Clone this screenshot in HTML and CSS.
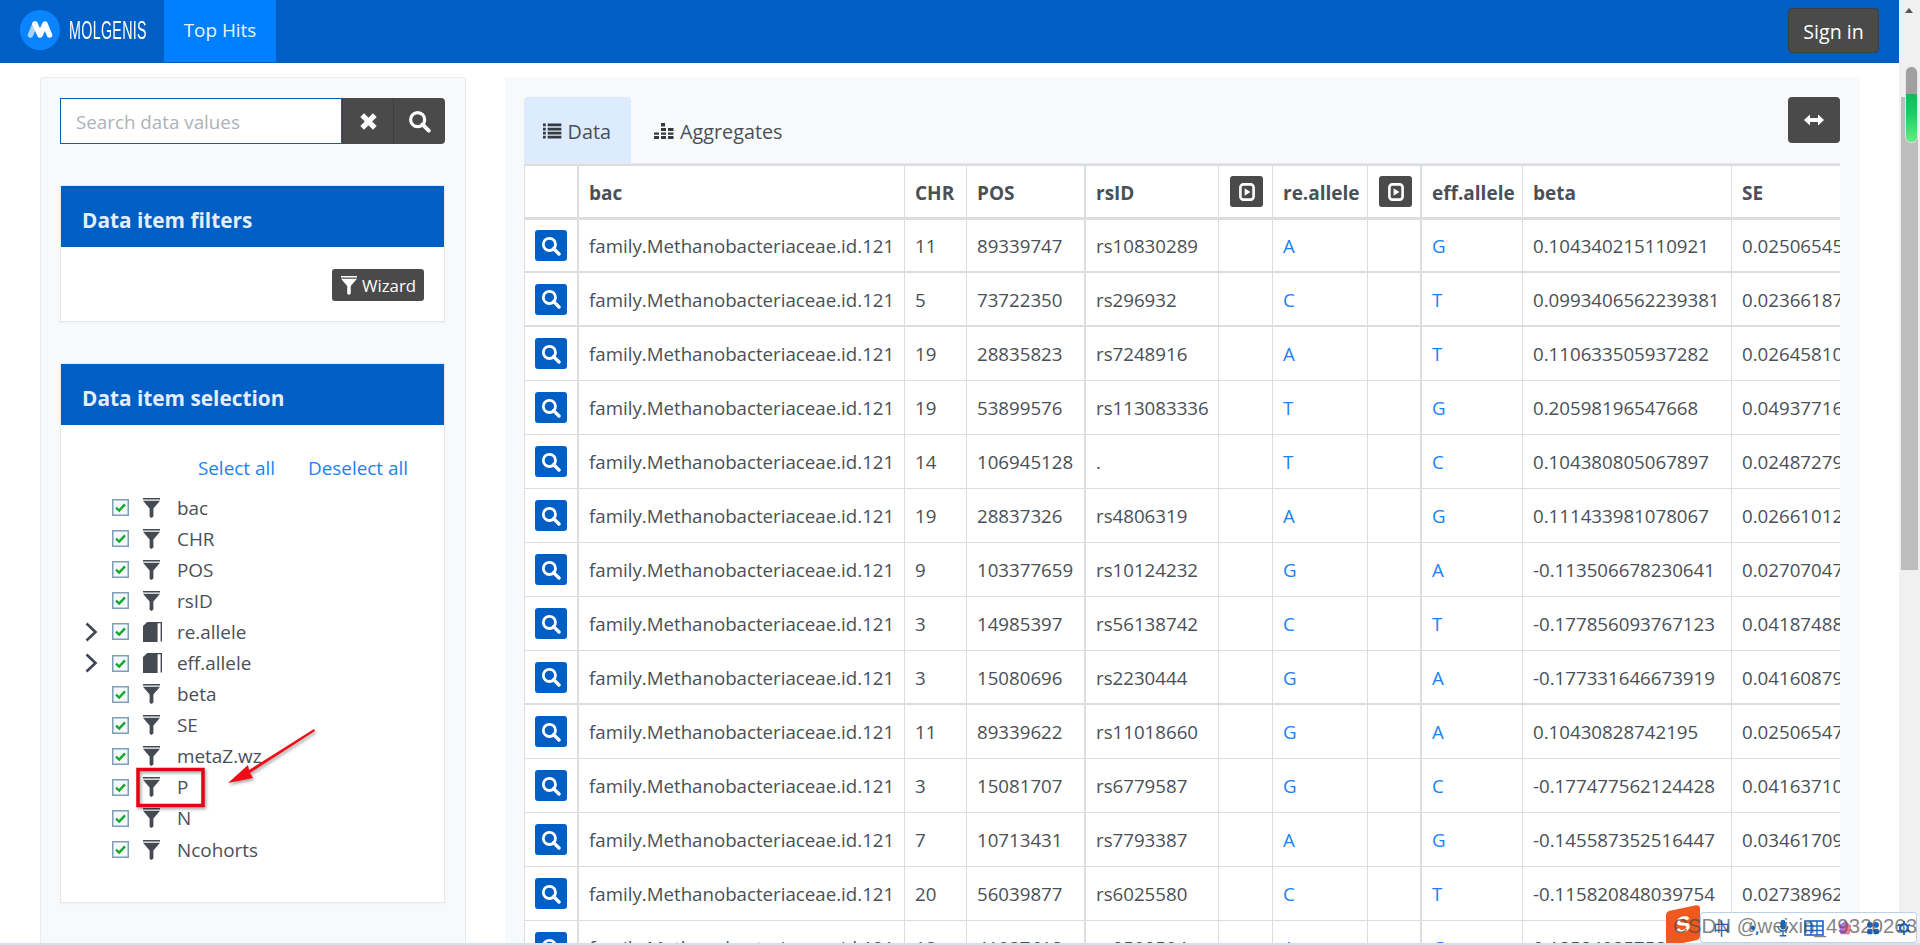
FILE: index.html
```html
<!DOCTYPE html>
<html lang="en">
<head>
<meta charset="utf-8">
<title>MOLGENIS Top Hits</title>
<link rel="stylesheet" href="styles.css">
</head>
<body>
<svg class="defs" width="0" height="0" aria-hidden="true">
  <symbol id="i-search" viewBox="0 0 20 20"><circle cx="8.4" cy="8.4" r="6.1" fill="none" stroke="currentColor" stroke-width="2.8"/><path d="M12.6 12.6L18 18" stroke="currentColor" stroke-width="3.4" stroke-linecap="round"/></symbol>
  <symbol id="i-times" viewBox="0 0 20 20"><path d="M4 4L16 16M16 4L4 16" stroke="currentColor" stroke-width="5" fill="none"/></symbol>
  <symbol id="i-filter" viewBox="0 0 17 20"><path d="M0 0H17V1.6H0zM0 2.8H17L10.4 10.5V18.4L8.4 20L6.6 18.8V10.5z" fill="currentColor"/></symbol>
  <symbol id="i-book" viewBox="0 0 19 20"><path d="M0 4L3.5 .8H14.600V20H0z" fill="currentColor"/><path d="M4 0H19V19.400H17.600V1.300H4.400L3 2.500z" fill="currentColor"/></symbol>
  <symbol id="i-chev" viewBox="0 0 13 20"><path d="M1.5 1.5L10.5 10L1.5 18.5" fill="none" stroke="currentColor" stroke-width="2.6"/></symbol>
  <symbol id="i-list" viewBox="0 0 20 16"><path d="M0 0H3V3H0zM5 0H20V3H5zM0 4.4H3V7.4H0zM5 4.4H20V7.4H5zM0 8.8H3V11.8H0zM5 8.8H20V11.8H5zM0 13H3V16H0zM5 13H20V16H5z" fill="currentColor"/></symbol>
  <symbol id="i-agg" viewBox="0 0 20 16"><path d="M0 13H5V16H0zM0 9.4H5V11.8H0zM7 13H12V16H7zM7 9.4H12V11.8H7zM7 5H12V8H7zM7 0H11V3.4H7zM14 13H19.5V16H14zM14 9.4H19.5V11.8H14zM14 5H19.5V8H14z" fill="currentColor"/></symbol>
  <symbol id="i-expand" viewBox="0 0 20 14"><path d="M0 7L6 1.5V5H14V1.5L20 7L14 12.5V9H6V12.5z" fill="currentColor"/></symbol>
  <symbol id="i-play" viewBox="0 0 16 18"><rect x="1.4" y="1.4" width="13.2" height="15.2" rx="3" fill="none" stroke="currentColor" stroke-width="2.6"/><path d="M5.6 5.2L11.4 9L5.6 12.8z" fill="currentColor"/></symbol>
  <symbol id="i-check" viewBox="0 0 17 17"><rect x=".75" y=".75" width="15.5" height="15.5" fill="#f4f8fb" stroke="#7f9fb8" stroke-width="1.5"/><path d="M4 8.6L7.2 11.6L13 5.4" fill="none" stroke="#14a82e" stroke-width="2.4"/></symbol>
</svg>

<div class="page">
  <div class="content">
    <header class="navbar">
      <div class="brand">
        <svg class="brand-mark" viewBox="0 0 40 40" aria-hidden="true">
          <circle cx="20" cy="20" r="20" fill="#0a84ff"/>
          <path d="M10.500 25L15 14" stroke="#a9d4ff" stroke-width="5.500" stroke-linecap="round"/>
          <path d="M15 14L20 25L25 14L29.500 25" fill="none" stroke="#fff" stroke-width="5.500" stroke-linecap="round" stroke-linejoin="round"/>
        </svg>
        <span class="brand-name">MOLGENIS</span>
      </div>
      <a class="nav-item">Top Hits</a>
      <button class="btn-dark signin">Sign in</button>
    </header>

    <div class="columns">
      <aside class="sidebar">
        <div class="search">
          <div class="search-input">Search data values</div>
          <button class="btn-dark search-btn"><svg class="ico-18"><use href="#i-times"/></svg></button>
          <button class="btn-dark search-btn last"><svg class="ico-20"><use href="#i-search"/></svg></button>
        </div>

        <section class="card">
          <h4 class="card-head">Data item filters</h4>
          <div class="card-body wizard-body">
            <button class="btn-dark wizard"><svg class="ico-wiz"><use href="#i-filter"/></svg>Wizard</button>
          </div>
        </section>

        <section class="card">
          <h4 class="card-head">Data item selection</h4>
          <div class="card-body tree-body">
            <div class="tree-links"><a>Select all</a><a>Deselect all</a></div>
            <ul class="tree">
              <li><span class="chev"></span><svg class="chk"><use href="#i-check"/></svg><svg class="t-ico"><use href="#i-filter"/></svg><span>bac</span></li>
              <li><span class="chev"></span><svg class="chk"><use href="#i-check"/></svg><svg class="t-ico"><use href="#i-filter"/></svg><span>CHR</span></li>
              <li><span class="chev"></span><svg class="chk"><use href="#i-check"/></svg><svg class="t-ico"><use href="#i-filter"/></svg><span>POS</span></li>
              <li><span class="chev"></span><svg class="chk"><use href="#i-check"/></svg><svg class="t-ico"><use href="#i-filter"/></svg><span>rsID</span></li>
              <li><svg class="chev"><use href="#i-chev"/></svg><svg class="chk"><use href="#i-check"/></svg><svg class="t-ico t-book"><use href="#i-book"/></svg><span>re.allele</span></li>
              <li><svg class="chev"><use href="#i-chev"/></svg><svg class="chk"><use href="#i-check"/></svg><svg class="t-ico t-book"><use href="#i-book"/></svg><span>eff.allele</span></li>
              <li><span class="chev"></span><svg class="chk"><use href="#i-check"/></svg><svg class="t-ico"><use href="#i-filter"/></svg><span>beta</span></li>
              <li><span class="chev"></span><svg class="chk"><use href="#i-check"/></svg><svg class="t-ico"><use href="#i-filter"/></svg><span>SE</span></li>
              <li><span class="chev"></span><svg class="chk"><use href="#i-check"/></svg><svg class="t-ico"><use href="#i-filter"/></svg><span>metaZ.wz</span></li>
              <li><span class="chev"></span><svg class="chk"><use href="#i-check"/></svg><svg class="t-ico"><use href="#i-filter"/></svg><span>P</span></li>
              <li><span class="chev"></span><svg class="chk"><use href="#i-check"/></svg><svg class="t-ico"><use href="#i-filter"/></svg><span>N</span></li>
              <li><span class="chev"></span><svg class="chk"><use href="#i-check"/></svg><svg class="t-ico"><use href="#i-filter"/></svg><span>Ncohorts</span></li>
            </ul>
          </div>
        </section>
      </aside>

      <main class="main">
        <div class="tabs">
          <a class="tab active"><svg class="tab-ico"><use href="#i-list"/></svg>Data</a>
          <a class="tab"><svg class="tab-ico"><use href="#i-agg"/></svg>Aggregates</a>
          <button class="btn-dark expand"><svg class="ico-exp"><use href="#i-expand"/></svg></button>
        </div>
        <div class="table-wrap">
          <table class="grid">
            <colgroup>
              <col class="c-act"><col class="c-bac"><col class="c-chr"><col class="c-pos"><col class="c-rs"><col class="c-tog"><col class="c-re"><col class="c-tog"><col class="c-eff"><col class="c-beta"><col class="c-se">
            </colgroup>
            <thead>
              <tr><th class="thick"></th><th>bac</th><th>CHR</th><th class="thick">POS</th><th>rsID</th><th><span class="btn-dark tog"><svg class="ico-play"><use href="#i-play"/></svg></span></th><th>re.allele</th><th class="thick"><span class="btn-dark tog"><svg class="ico-play"><use href="#i-play"/></svg></span></th><th>eff.allele</th><th>beta</th><th>SE</th></tr>
            </thead>
            <tbody>
              <tr><td class="thick"><span class="view"><svg class="ico-view"><use href="#i-search"/></svg></span></td><td>family.Methanobacteriaceae.id.121</td><td>11</td><td class="thick">89339747</td><td>rs10830289</td><td></td><td><a>A</a></td><td class="thick"></td><td><a>G</a></td><td>0.104340215110921</td><td>0.02506545</td></tr>
              <tr><td class="thick"><span class="view"><svg class="ico-view"><use href="#i-search"/></svg></span></td><td>family.Methanobacteriaceae.id.121</td><td>5</td><td class="thick">73722350</td><td>rs296932</td><td></td><td><a>C</a></td><td class="thick"></td><td><a>T</a></td><td>0.0993406562239381</td><td>0.02366187</td></tr>
              <tr><td class="thick"><span class="view"><svg class="ico-view"><use href="#i-search"/></svg></span></td><td>family.Methanobacteriaceae.id.121</td><td>19</td><td class="thick">28835823</td><td>rs7248916</td><td></td><td><a>A</a></td><td class="thick"></td><td><a>T</a></td><td>0.110633505937282</td><td>0.02645810</td></tr>
              <tr><td class="thick"><span class="view"><svg class="ico-view"><use href="#i-search"/></svg></span></td><td>family.Methanobacteriaceae.id.121</td><td>19</td><td class="thick">53899576</td><td>rs113083336</td><td></td><td><a>T</a></td><td class="thick"></td><td><a>G</a></td><td>0.20598196547668</td><td>0.04937716</td></tr>
              <tr><td class="thick"><span class="view"><svg class="ico-view"><use href="#i-search"/></svg></span></td><td>family.Methanobacteriaceae.id.121</td><td>14</td><td class="thick">106945128</td><td>.</td><td></td><td><a>T</a></td><td class="thick"></td><td><a>C</a></td><td>0.104380805067897</td><td>0.02487279</td></tr>
              <tr><td class="thick"><span class="view"><svg class="ico-view"><use href="#i-search"/></svg></span></td><td>family.Methanobacteriaceae.id.121</td><td>19</td><td class="thick">28837326</td><td>rs4806319</td><td></td><td><a>A</a></td><td class="thick"></td><td><a>G</a></td><td>0.111433981078067</td><td>0.02661012</td></tr>
              <tr><td class="thick"><span class="view"><svg class="ico-view"><use href="#i-search"/></svg></span></td><td>family.Methanobacteriaceae.id.121</td><td>9</td><td class="thick">103377659</td><td>rs10124232</td><td></td><td><a>G</a></td><td class="thick"></td><td><a>A</a></td><td>-0.113506678230641</td><td>0.02707047</td></tr>
              <tr><td class="thick"><span class="view"><svg class="ico-view"><use href="#i-search"/></svg></span></td><td>family.Methanobacteriaceae.id.121</td><td>3</td><td class="thick">14985397</td><td>rs56138742</td><td></td><td><a>C</a></td><td class="thick"></td><td><a>T</a></td><td>-0.177856093767123</td><td>0.04187488</td></tr>
              <tr><td class="thick"><span class="view"><svg class="ico-view"><use href="#i-search"/></svg></span></td><td>family.Methanobacteriaceae.id.121</td><td>3</td><td class="thick">15080696</td><td>rs2230444</td><td></td><td><a>G</a></td><td class="thick"></td><td><a>A</a></td><td>-0.177331646673919</td><td>0.04160879</td></tr>
              <tr><td class="thick"><span class="view"><svg class="ico-view"><use href="#i-search"/></svg></span></td><td>family.Methanobacteriaceae.id.121</td><td>11</td><td class="thick">89339622</td><td>rs11018660</td><td></td><td><a>G</a></td><td class="thick"></td><td><a>A</a></td><td>0.10430828742195</td><td>0.02506547</td></tr>
              <tr><td class="thick"><span class="view"><svg class="ico-view"><use href="#i-search"/></svg></span></td><td>family.Methanobacteriaceae.id.121</td><td>3</td><td class="thick">15081707</td><td>rs6779587</td><td></td><td><a>G</a></td><td class="thick"></td><td><a>C</a></td><td>-0.177477562124428</td><td>0.04163710</td></tr>
              <tr><td class="thick"><span class="view"><svg class="ico-view"><use href="#i-search"/></svg></span></td><td>family.Methanobacteriaceae.id.121</td><td>7</td><td class="thick">10713431</td><td>rs7793387</td><td></td><td><a>A</a></td><td class="thick"></td><td><a>G</a></td><td>-0.145587352516447</td><td>0.03461709</td></tr>
              <tr><td class="thick"><span class="view"><svg class="ico-view"><use href="#i-search"/></svg></span></td><td>family.Methanobacteriaceae.id.121</td><td>20</td><td class="thick">56039877</td><td>rs6025580</td><td></td><td><a>C</a></td><td class="thick"></td><td><a>T</a></td><td>-0.115820848039754</td><td>0.02738962</td></tr>
              <tr><td class="thick"><span class="view"><svg class="ico-view"><use href="#i-search"/></svg></span></td><td>family.Methanobacteriaceae.id.121</td><td>13</td><td class="thick">41037618</td><td>rs9509504</td><td></td><td><a>A</a></td><td class="thick"></td><td><a>G</a></td><td>0.185840357580</td><td>0.03561011</td></tr>
            </tbody>
          </table>
        </div>
      </main>
    </div>
  </div>

  <div class="scrollbar">
    <span class="sb-up"></span>
    <div class="sb-thumb"></div>
    <div class="sb-pill"></div>
  </div>
</div>

<svg class="annot" viewBox="0 0 1920 945" aria-hidden="true">
  <defs><filter id="sh" x="-20%" y="-20%" width="140%" height="140%"><feDropShadow dx="1.5" dy="2" stdDeviation="1.5" flood-color="#000" flood-opacity=".35"/></filter></defs>
  <rect x="138" y="769.5" width="65" height="36" fill="none" stroke="#e60012" stroke-width="3.5" filter="url(#sh)"/>
  <path d="M314 729L315 731L250 773L253 778L228 783L248 765L249 770z" fill="#ee0a14" filter="url(#sh)"/>
</svg>

<div class="ime">
  <span class="ime-zh">中</span>
  <span class="ime-comma">•,</span>
  <svg class="ime-i" viewBox="0 0 16 22"><rect x="5" y="1" width="6" height="12" rx="3" fill="#1667c9"/><path d="M2 9a6 6 0 0 0 12 0M8 15V20M4 20.5H12" fill="none" stroke="#1667c9" stroke-width="1.6"/></svg>
  <svg class="ime-i wide" viewBox="0 0 20 18"><rect x="1" y="2" width="18" height="14" fill="none" stroke="#1667c9" stroke-width="1.6"/><path d="M1 7H19M1 11.500H19M7 2V16M13 2V16" stroke="#1667c9" stroke-width="1.4"/></svg>
  <svg class="ime-i" viewBox="0 0 16 18"><path d="M1 6L8 1L15 6L13 16H3z" fill="#b36fe0"/><path d="M9 3L15 6L13 16L7 14z" fill="#ef7f90"/></svg>
  <svg class="ime-i" viewBox="0 0 18 18"><circle cx="5" cy="5" r="3.600" fill="#1667c9"/><circle cx="13" cy="5" r="3.600" fill="#1667c9"/><rect x="1.500" y="10" width="7" height="7" rx="2" fill="#1667c9"/><rect x="9.500" y="10" width="7" height="7" rx="2" fill="#1667c9"/></svg>
  <svg class="ime-i ime-gear" viewBox="0 0 18 18"><circle cx="9" cy="9" r="5" fill="none" stroke="#1667c9" stroke-width="3"/><path d="M9 0V4M9 14V18M1 4.500L4.500 6.500M13.500 11.500L17 13.500M1 13.500L4.500 11.500M13.500 6.500L17 4.500" stroke="#1667c9" stroke-width="2.400"/></svg>
</div>
<div class="csdn-logo"><span>S</span></div>
<div class="watermark">CSDN @weixin_49320263</div>
<div class="edge-line"></div>
</body>
</html>
```

FILE: styles.css
```css
* { box-sizing: border-box; }
html, body { margin: 0; height: 945px; overflow: hidden; }
body {
  font-family: "Open Sans", "Noto Sans", sans-serif;
  font-size: 18.7px;
  color: #495057;
  background: #fff;
  position: relative;
}
.defs { position: absolute; }
button { font: inherit; border: 0; cursor: pointer; }
a { color: #1a82f7; }
svg { display: block; }

.page { display: flex; height: 945px; }
.content { width: 1899px; display: flex; flex-direction: column; }

/* navbar */
.navbar {
  height: 63px;
  flex: none;
  background: #005fc5;
  display: flex;
  align-items: flex-start;
  padding-left: 20px;
}
.brand { display: flex; align-items: center; height: 60px; width: 144px; }
.brand-mark { width: 40px; height: 40px; flex: none; }
.brand-name {
  font-family: "Liberation Sans", sans-serif;
  font-size: 25px;
  color: #fff;
  margin-left: 9px;
  transform: scaleX(.57);
  transform-origin: left center;
  letter-spacing: .6px;
}
.nav-item {
  width: 112px;
  height: 62px;
  background: #0080ff;
  color: #e8f3ff;
  font-size: 18.9px;
  line-height: 60px;
  text-align: center;
}
.btn-dark { background: #4a4a4a; color: #fff; border-radius: 4px; display: flex; align-items: center; justify-content: center; }
.signin { margin-left: auto; margin-right: 20px; margin-top: 8px; width: 91px; height: 45px; font-size: 19.6px; padding-top: 2px; border: 1px solid #3a3f45; }

/* columns */
.columns { flex: 1; display: flex; padding: 14px 0 0 40px; gap: 39px; min-height: 0; }
.sidebar {
  width: 426px;
  flex: none;
  background: #f8f9fa;
  border: 1px solid #e9ecef;
  border-bottom: 0;
  border-radius: 3px 3px 0 0;
  padding: 20px 20px 20px 19px;
}
.search { display: flex; height: 46px; }
.search-input {
  width: 282px;
  border: 1.5px solid #005fc5;
  background: #fff;
  color: #adb2b7;
  font-size: 18.8px;
  line-height: 46px;
  padding-left: 15px;
}
.search-btn { width: 51px; height: 46px; border-radius: 0; border-left: 1px solid #3f3f3f; }
.search-btn.last { width: 52px; border-radius: 0 4px 4px 0; }
.ico-18 { width: 21px; height: 21px; }
.ico-20 { width: 23px; height: 23px; }

.card {
  width: 385px;
  margin-top: 41px;
  background: #fff;
  border: 1px solid #e6e8ea;
  box-shadow: 0 1px 2px rgba(0,0,0,.04);
}
.card-head {
  margin: 0;
  height: 61px;
  background: #005fc5;
  color: #e4eefb;
  font-size: 20.8px;
  font-weight: 700;
  line-height: 68px;
  padding-left: 21px;
}
.wizard-body { display: flex; justify-content: flex-end; padding: 22px 20px 20px 0; }
.wizard { width: 92px; height: 32px; font-size: 16.8px; gap: 5px; padding-left: 7px; border-radius: 3px; }
.ico-wiz { width: 16px; height: 19px; }

.tree-body { padding: 28px 0 37px; }
.tree-links { display: flex; justify-content: flex-end; gap: 33px; padding-right: 36px; height: 31px; line-height: 31px; font-size: 18.9px; }
.tree { list-style: none; margin: 8px 0 0; padding: 0 0 0 24px; }
.tree li { display: flex; align-items: center; height: 31.100px; font-size: 18.9px; }
.chev { width: 13px; height: 20px; margin-right: 14px; color: #3d4654; flex: none; }
.chk { width: 17px; height: 17px; margin-right: 14px; flex: none; }
.t-ico { width: 17px; height: 20px; margin-right: 17px; color: #454a52; flex: none; }
.t-book { width: 19px; margin-right: 15px; }

/* main panel */
.main {
  width: 1355px;
  flex: none;
  background: #f8f9fa;
  padding: 20px 20px 0 19px;
  min-width: 0;
}
.tabs { display: flex; height: 67px; border-bottom: 1px solid #e6e8ea; align-items: flex-start; }
.tab {
  height: 66px;
  display: flex;
  align-items: center;
  gap: 6px;
  color: #495057;
  font-size: 19.8px;
  padding: 2px 20px 0 23px;
  border-radius: 4px 4px 0 0;
}
.tab.active { background: #dcebfd; width: 107px; padding-left: 19px; }
.tab-ico { width: 20px; height: 16px; color: #343a40; }
.expand { margin-left: auto; width: 52px; height: 46px; }
.ico-exp { width: 20px; height: 14px; }

.table-wrap { overflow: hidden; width: 1316px; background: #fff; }
.grid { border-collapse: separate; border-spacing: 0; table-layout: fixed; width: 1408px; background: #fff; }
.c-act { width: 55px; } .c-bac { width: 326px; } .c-chr { width: 62px; } .c-pos { width: 119px; }
.c-rs { width: 133px; } .c-tog { width: 54px; } .c-re { width: 95px; } .c-eff { width: 101px; }
.c-beta { width: 209px; } .c-se { width: 200px; }
.grid th, .grid td {
  border-right: 1px solid #dcdde0;
  border-bottom: 1px solid #dcdde0;
  padding: 0 0 0 10px;
  text-align: left;
  white-space: nowrap;
  overflow: hidden;
}
.grid th { height: 56px; border-top: 2px solid #dcdde0; border-bottom-width: 3px; padding-top: 2px; font-size: 19px; font-weight: 700; }
.grid th:has(.tog) { padding-top: 0; }
.grid td { height: 54px; font-size: 18.7px; }
.grid tbody tr:first-child td { height: 53px; }
.grid tr > :first-child { border-left: 1px solid #dcdde0; }
.grid .thick { border-right-width: 2px; }
.grid tbody tr:nth-child(-n+2) td, .grid tbody tr:nth-child(9) td { border-bottom-width: 2px; }
.tog { width: 33px; height: 31px; border-radius: 3px; margin-left: 1px; }
.ico-play { width: 16px; height: 18px; }
.view { width: 32px; height: 31px; background: #005fc5; color: #fff; border-radius: 3px; display: flex; align-items: center; justify-content: center; }
.ico-view { width: 20px; height: 20px; }

/* browser scrollbar */
.scrollbar { width: 21px; flex: none; background: #f0f0f0; position: relative; padding: 97px 2px 0; }
.sb-up { position: absolute; left: 6px; top: 8px; width: 0; height: 0; border: 4.500px solid transparent; border-top: 0; border-bottom: 5px solid #555; }
.sb-thumb { height: 473px; background: #bdbdbd; }
.sb-pill {
  position: absolute;
  left: 7px;
  top: 67px;
  width: 11px;
  height: 75px;
  border-radius: 6px;
  background: linear-gradient(#a0a0a0 0 36%, #17b85a 36%, #1bc964 60%, #62ee80 100%);
  box-shadow: 0 0 0 1px #e4e4e4;
}

/* overlays */
.annot { position: absolute; left: 0; top: 0; width: 1920px; height: 945px; pointer-events: none; }
.ime {
  position: absolute;
  left: 1700px;
  top: 912px;
  width: 217px;
  height: 31px;
  background: #fff;
  border: 1px solid #bcd0e6;
  border-radius: 3px;
  display: flex;
  align-items: center;
  gap: 14px;
  padding-left: 12px;
}
.ime-zh { color: #1667c9; font-family: "Noto Sans CJK SC", sans-serif; font-size: 17px; width: 18px; line-height: 24px; }
.ime-comma { color: #1667c9; font-size: 14px; font-weight: 700; width: 12px; margin-left: 5px; line-height: 20px; }
.ime-i { width: 14px; height: 18px; flex: none; }
.ime-i.wide { width: 20px; }
.ime-gear { margin-left: 3px; }
.csdn-logo {
  position: absolute;
  left: 1666px;
  top: 908px;
  width: 34px;
  height: 35px;
  background: #f0591e;
  border-radius: 4px;
  transform: skewY(-12deg);
  color: #fff;
  font-family: "Liberation Sans", sans-serif;
  font-weight: 700;
  font-size: 22px;
  text-align: center;
  line-height: 34px;
}
.watermark {
  position: absolute;
  left: 1673px;
  top: 913px;
  font-family: "Liberation Sans", sans-serif;
  font-size: 20.500px;
  line-height: 26px;
  color: rgba(70,70,70,.68);
  white-space: nowrap;
}
.edge-line { position: absolute; left: 0; right: 0; top: 943px; height: 2px; background: #d9e0e8; }
```
